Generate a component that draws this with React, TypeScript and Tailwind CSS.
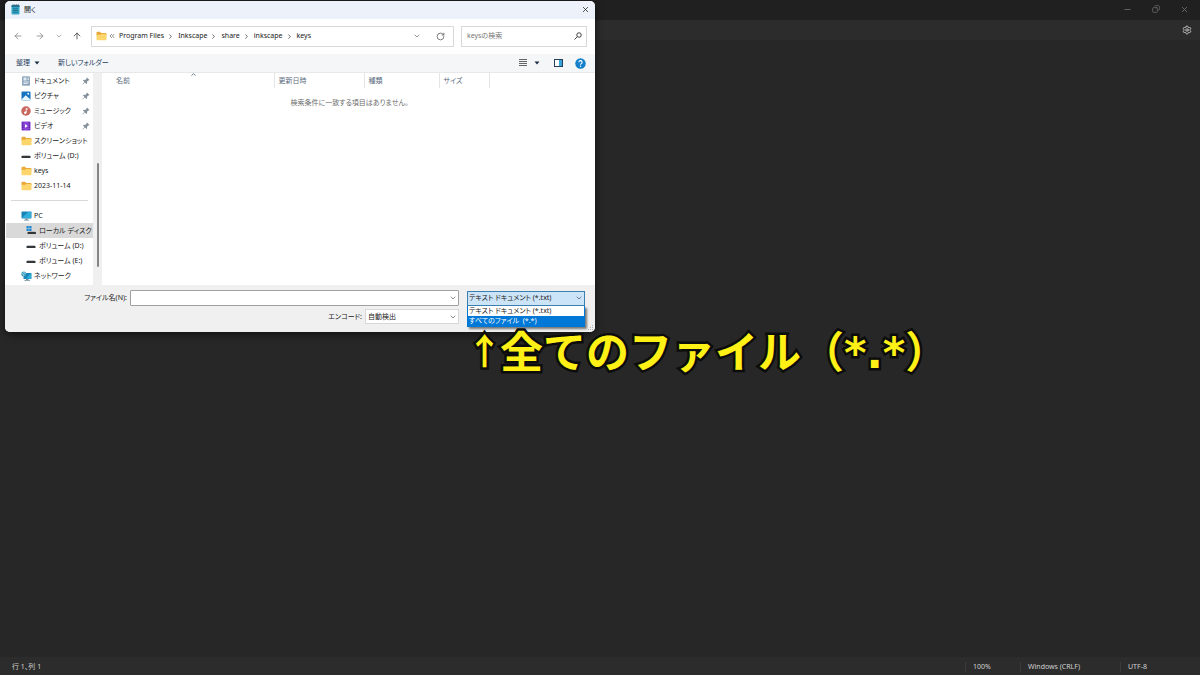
import { useState } from 'react';
import type { ReactNode } from 'react';
import {
  ArrowLeft,
  ArrowRight,
  ArrowUp,
  ChevronDown,
  ChevronRight,
  ChevronUp,
  ChevronsLeft,
  Copy,
  Minus,
  RotateCw,
  Settings,
  X,
} from 'lucide-react';

const FolderIcon = () => (
  <svg width="11" height="10" viewBox="0 0 22 20">
    <path d="M1 3.500A2 2 0 0 1 3 1.500h5l2.500 2.500H19a2 2 0 0 1 2 2V9H1z" fill="#e8a93a" />
    <path d="M1 7.500h7.500l2-1.500H19a2 2 0 0 1 2 2v8.500a2 2 0 0 1-2 2H3a2 2 0 0 1-2-2z" fill="#fcd56c" />
  </svg>
);

const NotepadIcon = () => (
  <svg width="9" height="11" viewBox="0 0 18 22">
    <rect x="1" y="2" width="16" height="19" rx="2" fill="#35a6c6" />
    <path d="M1 4a2 2 0 0 1 2-2h12a2 2 0 0 1 2 2v2H1z" fill="#1b6f93" />
    <path d="M4 0v4M7.500 0v4M11 0v4M14.500 0v4" stroke="#5a6f7a" strokeWidth="1.500" />
    <path d="M4 9.500h10M4 13h10M4 16.500h10" stroke="#17607f" strokeWidth="1.400" />
  </svg>
);

const DocumentIcon = () => (
  <svg width="10" height="10" viewBox="0 0 20 20">
    <rect x="2" y="0.500" width="16" height="19" rx="2" fill="#8fa6bd" />
    <rect x="5" y="3" width="6" height="6" fill="#dfe9f2" />
    <path d="M13 4h3M13 7h3M5 12h11M5 15h8" stroke="#f3f7fb" strokeWidth="1.600" />
  </svg>
);

const PictureIcon = () => (
  <svg width="10" height="10" viewBox="0 0 20 20">
    <rect x="1" y="1" width="18" height="18" rx="2" fill="#1673c0" />
    <path d="M1 17l8.500-8.500L19 17a2 2 0 0 1-2 2H3a2 2 0 0 1-2-2z" fill="#e6f4fd" />
    <circle cx="14.500" cy="5.500" r="1.800" fill="#fff" />
  </svg>
);

const MusicIcon = () => (
  <svg width="10" height="10" viewBox="0 0 20 20">
    <circle cx="10" cy="10" r="9.500" fill="#c9675e" />
    <path d="M10.500 13.500V4.500l3.500 2" stroke="#fff" strokeWidth="1.800" fill="none" />
    <circle cx="8.500" cy="13.500" r="2.400" fill="#fff" />
  </svg>
);

const VideoIcon = () => (
  <svg width="10" height="10" viewBox="0 0 20 20">
    <rect x="1" y="1" width="18" height="18" rx="2" fill="#8a45d6" />
    <path d="M3.500 3v15M16.500 3v15" stroke="#4c1c93" strokeWidth="2.400" strokeDasharray="2.500 1.800" />
    <path d="M8 6.500l5.500 3.500L8 13.500z" fill="#fff" />
  </svg>
);

const DriveIcon = () => (
  <svg width="10" height="10" viewBox="0 0 20 20">
    <path d="M3 8h14l2 3H1z" fill="#c4c6c8" />
    <rect x="1" y="10" width="18" height="4" rx="1" fill="#33373a" />
  </svg>
);

const SystemDriveIcon = () => (
  <svg width="10" height="10" viewBox="0 0 20 20">
    <path d="M1 0h4.500v4.500H1zM6.500 0H11v4.500H6.500zM1 5.500h4.500V10H1zM6.500 5.500H11V10H6.500z" fill="#1785cf" />
    <path d="M5 10h13l1.500 2H4z" fill="#b9bcbf" />
    <rect x="3" y="12" width="17" height="4" rx="1" fill="#33373a" />
  </svg>
);

const PcIcon = () => (
  <svg width="11" height="10" viewBox="0 0 22 20">
    <rect x="1" y="1" width="20" height="14" rx="1.500" fill="#1784b8" />
    <path d="M2 14L14 2h6v12z" fill="#2fb0dc" />
    <path d="M9 15h4v2.500h3V19H6v-1.500h3z" fill="#6b8a9a" />
  </svg>
);

const NetworkIcon = () => (
  <svg width="11" height="10" viewBox="0 0 22 20">
    <rect x="5" y="4" width="16" height="12" rx="1" fill="#1784b8" />
    <path d="M10 15.500L19 5h1v10.500z" fill="#2fb0dc" />
    <path d="M10 16h5v2h3v1.500H7V18h3z" fill="#6b8a9a" />
    <circle cx="5.500" cy="6" r="5" fill="#3b9bbd" />
    <path d="M1 5l4 1 1 4M5 1l1 3 4 1" stroke="#bfe6f2" strokeWidth="1.300" fill="none" />
  </svg>
);

const PinIcon = () => (
  <svg width="8" height="8" viewBox="0 0 16 16">
    <path d="M10 1l5 5-1.500 1-1 0-2.500 2.500.300 3L9 14 5.800 10.800 1.500 15l-.700-.700L5 10 2 7l1.300-1.300 3 .300L9 3.500v-1z" fill="#84909b" />
  </svg>
);

const SearchIcon = () => (
  <svg width="8" height="8" viewBox="0 0 16 16" fill="none" stroke="#333" strokeWidth="1.800">
    <circle cx="10" cy="6" r="4.500" />
    <path d="M6.800 9.200L1 15" />
  </svg>
);

const DropArrow = () => (
  <svg width="6" height="4" viewBox="0 0 6 4">
    <path d="M.5 .5h5L3 3.500z" fill="#1c2f45" />
  </svg>
);

const quickAccess: { label: string; icon: ReactNode; pinned?: boolean }[] = [
  { label: 'ドキュメント', icon: <DocumentIcon />, pinned: true },
  { label: 'ピクチャ', icon: <PictureIcon />, pinned: true },
  { label: 'ミュージック', icon: <MusicIcon />, pinned: true },
  { label: 'ビデオ', icon: <VideoIcon />, pinned: true },
  { label: 'スクリーンショット', icon: <FolderIcon /> },
  { label: 'ボリューム (D:)', icon: <DriveIcon /> },
  { label: 'keys', icon: <FolderIcon /> },
  { label: '2023-11-14', icon: <FolderIcon /> },
];

const devices: { label: string; icon: ReactNode; nested?: boolean; selected?: boolean }[] = [
  { label: 'PC', icon: <PcIcon /> },
  { label: 'ローカル ディスク (C:)', icon: <SystemDriveIcon />, nested: true, selected: true },
  { label: 'ボリューム (D:)', icon: <DriveIcon />, nested: true },
  { label: 'ボリューム (E:)', icon: <DriveIcon />, nested: true },
  { label: 'ネットワーク', icon: <NetworkIcon /> },
];

const path = ['Program Files', 'Inkscape', 'share', 'inkscape', 'keys'];
const fileTypes = ['テキスト ドキュメント (*.txt)', 'すべてのファイル  (*.*)'];

const OpenDialog = () => {
  const [fileName, setFileName] = useState('');
  const [keyword, setKeyword] = useState('');
  const [highlighted, setHighlighted] = useState(1);

  return (
    <section
      aria-label="開く"
      className="absolute left-[5px] top-px flex w-[590px] flex-col rounded-[5px] bg-white text-[#222] shadow-[0_2px_8px_rgba(0,0,0,0.6)]"
    >
      <header className="flex h-[18px] items-center gap-1 rounded-t-[5px] bg-[#edf2fa] pb-px pl-[6px] pr-[5px]">
        <NotepadIcon />
        <h1 className="flex-1 text-[7px]">開く</h1>
        <button type="button" aria-label="閉じる">
          <X size={9} strokeWidth={2} />
        </button>
      </header>

      <div className="flex h-[35px] items-center pb-px pl-2 pr-2">
        <div className="flex w-[78px] items-center text-[#8a8a8a]">
          <button type="button" aria-label="戻る" className="w-[22px]"><ArrowLeft size={10} strokeWidth={2} /></button>
          <button type="button" aria-label="進む" className="w-5"><ArrowRight size={10} strokeWidth={2} /></button>
          <button type="button" aria-label="最近の場所" className="w-[17px]"><ChevronDown size={8} strokeWidth={2} /></button>
          <button type="button" aria-label="上へ" className="text-[#444]"><ArrowUp size={10} strokeWidth={2} /></button>
        </div>
        <nav className="flex h-[21px] w-[363px] items-center border border-[#d9d9d9] pl-1 pr-2">
          <FolderIcon />
          <ChevronsLeft size={8} strokeWidth={2} className="ml-px mr-[3px] text-[#555]" />
          <ol className="flex flex-1 items-center">
            {path.map((name, i) => (
              <li key={name} className="flex items-center">
                {i > 0 && <ChevronRight size={7} strokeWidth={3} className="ml-[3px] mr-1 text-[#555]" />}
                <a href="#">{name}</a>
              </li>
            ))}
          </ol>
          <button type="button" aria-label="履歴" className="mr-[15px] text-[#666]"><ChevronDown size={8} /></button>
          <button type="button" aria-label="更新" className="text-[#555]"><RotateCw size={9} /></button>
        </nav>
        <label className="ml-[7px] flex h-[21px] flex-1 items-center border border-[#d9d9d9] pl-[5px] pr-1">
          <input
            value={keyword}
            onChange={(e) => setKeyword(e.target.value)}
            placeholder="keysの検索"
            aria-label="keysの検索"
            className="min-w-0 flex-1 outline-none placeholder:text-[#777]"
          />
          <SearchIcon />
        </label>
      </div>

      <div className="flex h-[18px] items-center bg-[#f4f6f8] pl-[11px] pr-[9px] text-[#27405c]">
        <button type="button" className="flex items-center gap-1">整理 <DropArrow /></button>
        <button type="button" className="ml-[18px]">新しいフォルダー</button>
        <div className="ml-auto flex items-center">
          <button type="button" aria-label="表示" className="flex items-center gap-[7px]">
            <svg width="8" height="8" viewBox="0 0 8 8">
              <path d="M0 .5h8M0 2.500h8M0 4.500h8M0 6.500h8" stroke="#666" />
            </svg>
            <DropArrow />
          </button>
          <button type="button" aria-label="プレビュー" className="ml-[14px]">
            <svg width="9" height="8" viewBox="0 0 9 8">
              <rect x=".5" y=".5" width="8" height="7" fill="#fff" stroke="#27405c" />
              <rect x="5" y="1" width="3" height="6" fill="#36a3dd" />
            </svg>
          </button>
          <button type="button" aria-label="ヘルプ" className="ml-3">
            <svg width="11" height="11" viewBox="0 0 22 22">
              <circle cx="11" cy="11" r="10.500" fill="#1480cb" />
              <path d="M7.800 8.500a3.200 3.200 0 1 1 4.700 2.800c-1 .6-1.500 1-1.500 2.400" stroke="#fff" strokeWidth="2.200" fill="none" />
              <circle cx="11" cy="16.500" r="1.400" fill="#fff" />
            </svg>
          </button>
        </div>
      </div>

      <div className="flex border-t border-[#e6e8ea]">
        <aside className="w-[88px] overflow-hidden pb-[2px] pl-px">
          <ul>
            {quickAccess.map((item) => (
              <li key={item.label} className="flex h-[15px] items-center pl-[15px] pr-[3px]">
                <span className="flex w-[13px] shrink-0">{item.icon}</span>
                <span className="flex-1 whitespace-nowrap">{item.label}</span>
                {item.pinned && <PinIcon />}
              </li>
            ))}
          </ul>
          <hr className="mx-[5px] my-[7px] border-[#d8d8d8]" />
          <ul>
            {devices.map((item) => (
              <li
                key={item.label}
                className={`flex h-[15px] items-center ${item.nested ? 'pl-5' : 'pl-[15px]'} ${item.selected ? 'bg-[#d9d9d9]' : ''}`}
              >
                <span className="flex w-[13px] shrink-0">{item.icon}</span>
                <span className="whitespace-nowrap">{item.label}</span>
              </li>
            ))}
          </ul>
        </aside>
        <div className="flex w-[9px] flex-col items-center bg-[#f0f0f0] pb-[18px]">
          <div className="mt-auto h-[104px] w-[2px] rounded-full bg-[#858585]" />
        </div>
        <div className="flex-1">
          <table className="w-full table-fixed border-collapse text-[#5b6b7d]">
            <thead>
              <tr className="h-[15px] text-left">
                <th className="relative w-[172px] border-r border-[#e5e5e5] pl-[14px] font-normal">
                  名前
                  <ChevronUp size={7} strokeWidth={3} className="absolute -top-[2px] left-[88px]" />
                </th>
                <th className="w-[90px] border-r border-[#e5e5e5] pl-1 font-normal">更新日時</th>
                <th className="w-[75px] border-r border-[#e5e5e5] pl-1 font-normal">種類</th>
                <th className="w-[50px] border-r border-[#e5e5e5] pl-1 font-normal">サイズ</th>
                <th />
              </tr>
            </thead>
            <tbody>
              <tr>
                <td colSpan={5} className="pl-[2px] pt-[10px] text-center text-[#6d6d6d]">
                  検索条件に一致する項目はありません。
                </td>
              </tr>
            </tbody>
          </table>
        </div>
      </div>

      <footer className="relative flex flex-col gap-[3px] rounded-b-[5px] bg-[#f0f0f0] pb-2 pr-[10px] pt-[5px]">
        <div className="flex items-center">
          <label htmlFor="file-name" className="w-[122px] text-right">ファイル名(N):</label>
          <div className="ml-[3px] mr-2 flex h-4 flex-1 items-center rounded-[1px] border border-[#a0a0a0] bg-white pr-[1px]">
            <input
              id="file-name"
              value={fileName}
              onChange={(e) => setFileName(e.target.value)}
              className="min-w-0 flex-1 px-[2px] outline-none"
            />
            <ChevronDown size={8} className="text-[#555]" />
          </div>
          <div className="relative w-[118px]">
            <button
              type="button"
              aria-haspopup="listbox"
              aria-expanded="true"
              className="flex h-[15px] w-full items-center justify-between border border-[#3c7fb1] bg-[#cce4f7] pl-[1px] pr-[1px]"
            >
              {fileTypes[0]}
              <ChevronDown size={8} className="text-[#445]" />
            </button>
            <ul
              role="listbox"
              aria-label="ファイルの種類"
              className="absolute left-0 top-full w-full border border-t-0 border-[#0078d7] bg-white shadow-[2px_2px_2px_rgba(0,0,0,0.5)]"
            >
              {fileTypes.map((type, i) => (
                <li
                  key={type}
                  role="option"
                  aria-selected={i === highlighted}
                  onMouseEnter={() => setHighlighted(i)}
                  className={`flex h-[10px] items-center whitespace-pre pl-[1px] ${i === highlighted ? 'bg-[#0078d7] text-white' : ''}`}
                >
                  {type}
                </li>
              ))}
            </ul>
          </div>
        </div>
        <div className="flex items-center justify-end pr-[126px]">
          <label htmlFor="encoding" className="mr-[3px]">エンコード:</label>
          <div className="flex h-[15px] w-[94px] items-center border border-[#d8d8d8] bg-white pr-[1px]">
            <select id="encoding" className="flex-1 appearance-none pl-[2px] outline-none">
              <option>自動検出</option>
            </select>
            <ChevronDown size={8} className="text-[#555]" />
          </div>
        </div>
        <svg width="6" height="6" viewBox="0 0 6 6" className="absolute bottom-px right-px">
          <path d="M4 0h1v1H4zM2 2h1v1H2zM4 2h1v1H4zM0 4h1v1H0zM2 4h1v1H2zM4 4h1v1H4z" fill="#b5b5b5" />
        </svg>
      </footer>
    </section>
  );
};

const App = () => (
  <main
    lang="ja"
    className="relative flex h-screen flex-col overflow-hidden bg-[#272727] font-['Noto_Sans','Noto_Sans_CJK_JP',sans-serif] text-[7px] leading-[10px] text-[#d0d0d0] [font-feature-settings:'palt']"
  >
    <div className="flex h-5 items-center justify-end gap-5 bg-[#202020] pb-[2px] pr-[11px] text-[#777]">
      <button type="button" aria-label="最小化"><Minus size={9} /></button>
      <button type="button" aria-label="元に戻す"><Copy size={8} className="-scale-x-100" /></button>
      <button type="button" aria-label="閉じる"><X size={9} /></button>
    </div>
    <div className="flex h-5 items-center justify-end bg-[#2c2c2c] pr-2">
      <button type="button" aria-label="設定"><Settings size={10} strokeWidth={2} /></button>
    </div>

    <textarea aria-label="テキスト エディター" className="flex-1 resize-none bg-transparent outline-none" />

    <footer className="flex h-[18px] items-center bg-[#2c2c2c] pl-3 pt-[2px]">
      <span className="flex-1">行 1、列 1</span>
      <span className="w-[55px] border-l border-[#3a3a3a] pl-[7px]">100%</span>
      <span className="w-[100px] border-l border-[#3a3a3a] pl-[7px]">Windows (CRLF)</span>
      <span className="w-20 border-l border-[#3a3a3a] pl-[7px]">UTF-8</span>
    </footer>

    <OpenDialog />

    <p className="absolute left-[469px] top-[329px] flex items-baseline whitespace-pre font-['Noto_Sans_CJK_JP',sans-serif] text-[43px] leading-[40px] font-bold text-[#fff016] [-webkit-text-stroke:5px_#0c0c0c] [font-feature-settings:normal] [paint-order:stroke_fill]">
      <span className="flex w-[31px] justify-center self-start text-4xl leading-[40px]">↑</span>
      <span>全てのファイル（</span>
      <span className="font-['DejaVu_Sans',sans-serif]">*.*</span>
      <span>）</span>
    </p>
  </main>
);

export default App;
